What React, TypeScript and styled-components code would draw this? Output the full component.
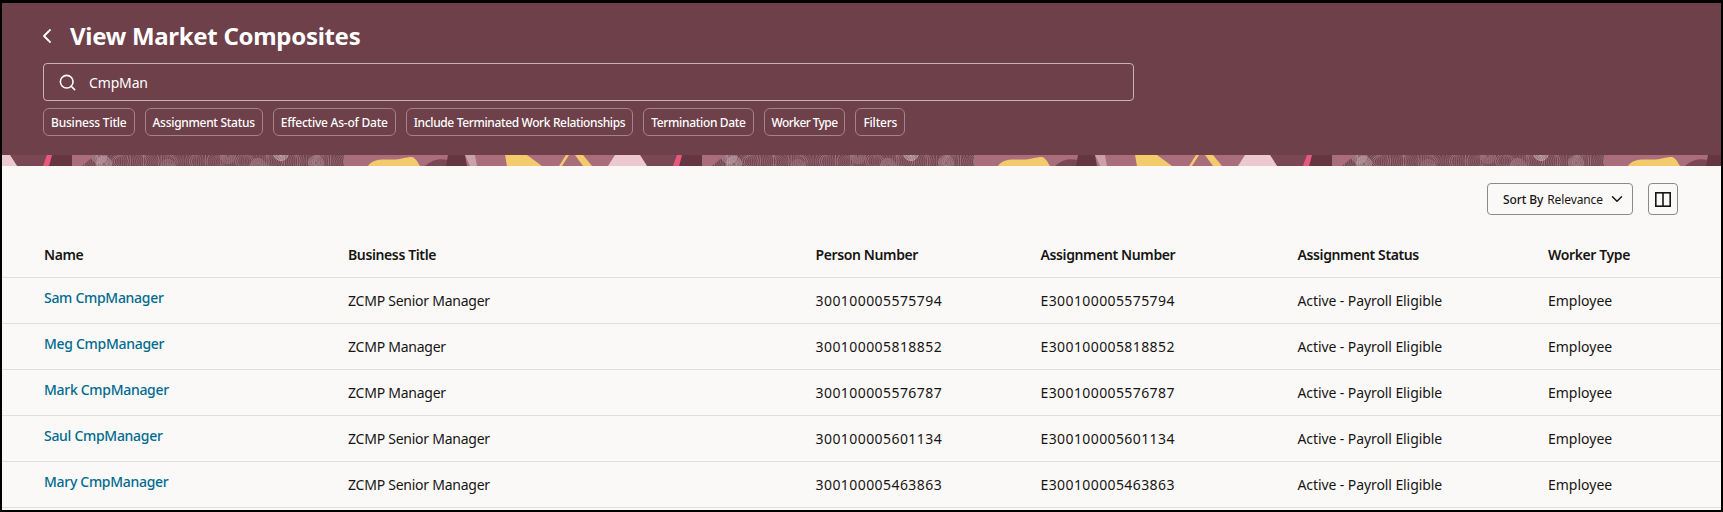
import styled, { createGlobalStyle } from 'styled-components';
import { ChevronDown, ChevronLeft, Search } from 'lucide-react';

const FONT = '"Noto Sans", "Liberation Sans", sans-serif';

const GlobalStyle = createGlobalStyle`
  html, body {
    margin: 0;
    padding: 0;
    background: #000;
  }
  body {
    font-family: ${FONT};
    color: #161513;
  }
`;

const Frame = styled.div`
  width: 1723px;
  height: 512px;
  box-sizing: border-box;
  padding: 3px 2px 2px 2px;
  overflow: hidden;
`;

const Page = styled.div`
  height: 100%;
  background: #fbf9f8;
  overflow: hidden;
`;

const Header = styled.header`
  height: 152px;
  box-sizing: border-box;
  background: #6e4049;
  color: #fff;
  padding: 19px 41px 0;
`;

const TitleRow = styled.div`
  display: flex;
  align-items: center;
  height: 28px;
  gap: 11px;
`;

const BackIcon = styled(ChevronLeft)`
  width: 24px;
  height: 24px;
  margin-left: -8px;
  flex: none;
  stroke-width: 1.8;
`;

const Title = styled.h1`
  margin: 0;
  font-size: 24px;
  line-height: 28px;
  font-weight: 700;
  letter-spacing: -0.3px;
`;

const SearchBox = styled.div`
  display: flex;
  align-items: center;
  width: 1091px;
  height: 38px;
  box-sizing: border-box;
  margin-top: 13px;
  padding-left: 14px;
  gap: 12px;
  border: 1px solid #c8b4b8;
  border-radius: 4px;
  font-size: 14px;
  letter-spacing: -0.15px;
`;

const SearchIcon = styled(Search)`
  width: 19px;
  height: 19px;
  flex: none;
`;

const Chips = styled.div`
  display: flex;
  gap: 10px;
  margin-top: 7px;
`;

const Chip = styled.div<{ $spacing: number }>`
  height: 28px;
  box-sizing: border-box;
  padding: 0 7px;
  display: flex;
  align-items: center;
  border: 1px solid #a28489;
  border-radius: 6px;
  font-size: 12px;
  font-weight: 500;
  letter-spacing: ${(p) => p.$spacing}px;
  white-space: nowrap;
`;

const Band = styled.svg`
  display: block;
  width: 100%;
  height: 11px;
`;

const Toolbar = styled.div`
  display: flex;
  justify-content: flex-end;
  align-items: center;
  gap: 15px;
  height: 32px;
  margin-top: 17px;
  padding-right: 43px;
`;

const SortButton = styled.div`
  display: flex;
  align-items: center;
  width: 146px;
  height: 32px;
  box-sizing: border-box;
  padding: 0 6px 0 15px;
  border: 1px solid #8c8986;
  border-radius: 4px;
  font-size: 12px;
  letter-spacing: -0.1px;
  white-space: nowrap;
`;

const SortLabel = styled.span`
  font-weight: 500;
  margin-right: 4px;
`;

const SortArrow = styled(ChevronDown)`
  width: 18px;
  height: 18px;
  margin-left: auto;
  stroke-width: 2;
`;

const IconButton = styled.div`
  display: flex;
  align-items: center;
  justify-content: center;
  width: 30px;
  height: 32px;
  box-sizing: border-box;
  border: 1px solid #8c8986;
  border-radius: 4px;
`;

const Row = styled.div`
  display: grid;
  grid-template-columns: 304px 467.5px 225px 257px 250.5px 1fr;
  align-items: center;
  height: 46px;
  box-sizing: border-box;
  padding-left: 42px;
  border-bottom: 1px solid #e1dfdd;
  font-size: 14px;
  white-space: nowrap;
`;

const HeadRow = styled(Row)`
  margin-top: 17px;
  font-weight: 600;
  letter-spacing: -0.38px;
`;

const Cell = styled.span<{ $spacing?: number }>`
  letter-spacing: ${(p) => p.$spacing ?? 0}px;
`;

const NameLink = styled.a`
  color: #006b8f;
  font-weight: 500;
  letter-spacing: -0.3px;
  text-decoration: none;
  margin-bottom: 6px;
`;

const columns = ['Name', 'Business Title', 'Person Number', 'Assignment Number', 'Assignment Status', 'Worker Type'];

const workers = [
  { name: 'Sam CmpManager', title: 'ZCMP Senior Manager', id: '300100005575794' },
  { name: 'Meg CmpManager', title: 'ZCMP Manager', id: '300100005818852' },
  { name: 'Mark CmpManager', title: 'ZCMP Manager', id: '300100005576787' },
  { name: 'Saul CmpManager', title: 'ZCMP Senior Manager', id: '300100005601134' },
  { name: 'Mary CmpManager', title: 'ZCMP Senior Manager', id: '300100005463863' },
];

const filters = [
  { label: 'Business Title', spacing: -0.2 },
  { label: 'Assignment Status', spacing: -0.3 },
  { label: 'Effective As-of Date', spacing: -0.23 },
  { label: 'Include Terminated Work Relationships', spacing: -0.37 },
  { label: 'Termination Date', spacing: -0.34 },
  { label: 'Worker Type', spacing: -0.6 },
  { label: 'Filters', spacing: -0.2 },
];

// fingerprint texture: fine wavy strands across the strip, with a few ring clusters on top
const strands = Array.from({ length: 120 }, (_, i) => {
  const x = 82 + i * 2.2;
  const bend = Math.sin(i * 0.55) * 3 + Math.sin(i * 0.13) * 2.5;
  return { x, d: `M${x + bend},0 Q${x - bend},5.5 ${x + bend * 0.4},11`, light: i % 7 < 2 };
});

const rings = [
  [104, 9, '#c9adb4'],
  [99, 1, '#c0a0a9'],
  [168, 12, '#a27a85'],
  [228, 1, '#a27a85'],
  [258, 11, '#a98591'],
  [281, -2, '#e4d3d7'],
  [316, 8, '#b4929b'],
] as const;

const ringRadii = [1.5, 2.7, 3.9, 5.1, 6.3, 7.5];

const BandArt = () => (
  <Band viewBox="0 0 1719 11" preserveAspectRatio="none">
    <defs>
      <clipPath id="strip">
        <polygon points="95,0 344,0 344,11 82,11" />
      </clipPath>
      <pattern id="tile" patternUnits="userSpaceOnUse" width="630" height="11" patternTransform="translate(-2 0)">
        <rect width="630" height="11" fill="#a96d7c" />
        <polygon points="10,0 72,0 72,11 17,11" fill="#7c4754" />
        <polygon points="-22,11 -15,0 10,0 17,11" fill="#ecc9d0" />
        <polygon points="608,11 615,0 640,0 647,11" fill="#ecc9d0" />
        <polygon points="52,0 72,0 72,11 49,11" fill="#653641" />
        <polygon points="47,0 52,0 49,11 43,11" fill="#e9587a" />
        <g clipPath="url(#strip)">
          <rect x="80" width="266" height="11" fill="#74454f" />
          {strands.map((s) => (
            <path key={s.x} d={s.d} fill="none" stroke={s.light ? '#b18d97' : '#96707b'} strokeWidth="0.7" />
          ))}
          {rings.map(([cx, cy, color]) =>
            ringRadii.map((r) => (
              <circle key={`${cx}-${r}`} cx={cx} cy={cy} r={r} fill="none" stroke={color} strokeWidth="0.6" />
            )),
          )}
        </g>
        <path d="M368,11 C372,5 378,4 390,4.5 C400,5 405,2 412,2 C416,3 418,8 420,11 Z" fill="#f3cb6c" />
        <path d="M425,11 C432,5 438,3 448,5 L448,11 Z" fill="#7c4754" />
        <polygon points="448,0 465,0 467,11 446,11" fill="#653641" />
        <polygon points="465,0 475,0 477,11 470,11" fill="#c9a0ab" />
        <polygon points="505,0 527,0 542,11 507,11" fill="#f3cb6c" />
        <polygon points="566,0 569,0 562,11 559,11" fill="#f3cb6c" />
        <polygon points="575,0 583,0 592,11 583,11" fill="#f3cb6c" />
      </pattern>
    </defs>
    <rect width="1719" height="11" fill="url(#tile)" />
  </Band>
);

const App = () => {
  return (
    <>
      <GlobalStyle />
      <Frame>
        <Page>
          <Header>
            <TitleRow>
              <BackIcon />
              <Title>View Market Composites</Title>
            </TitleRow>
            <SearchBox>
              <SearchIcon />
              CmpMan
            </SearchBox>
            <Chips>
              {filters.map((f) => (
                <Chip key={f.label} $spacing={f.spacing}>{f.label}</Chip>
              ))}
            </Chips>
          </Header>
          <BandArt />
          <Toolbar>
            <SortButton>
              <SortLabel>Sort By</SortLabel> Relevance
              <SortArrow />
            </SortButton>
            <IconButton>
              <svg width="16" height="15" viewBox="0 0 16 15" fill="none" stroke="#161513" strokeWidth="1.6">
                <rect x="0.8" y="0.8" width="14.4" height="13.4" />
                <line x1="8" y1="1" x2="8" y2="14" />
              </svg>
            </IconButton>
          </Toolbar>
          <HeadRow>
            {columns.map((c) => (
              <span key={c}>{c}</span>
            ))}
          </HeadRow>
          {workers.map((w) => (
            <Row key={w.id}>
              <NameLink href="#">{w.name}</NameLink>
              <Cell $spacing={-0.25}>{w.title}</Cell>
              <Cell $spacing={0.43}>{w.id}</Cell>
              <Cell $spacing={0.4}>E{w.id}</Cell>
              <Cell $spacing={-0.09}>Active - Payroll Eligible</Cell>
              <Cell>Employee</Cell>
            </Row>
          ))}
        </Page>
      </Frame>
    </>
  );
};

export default App;
